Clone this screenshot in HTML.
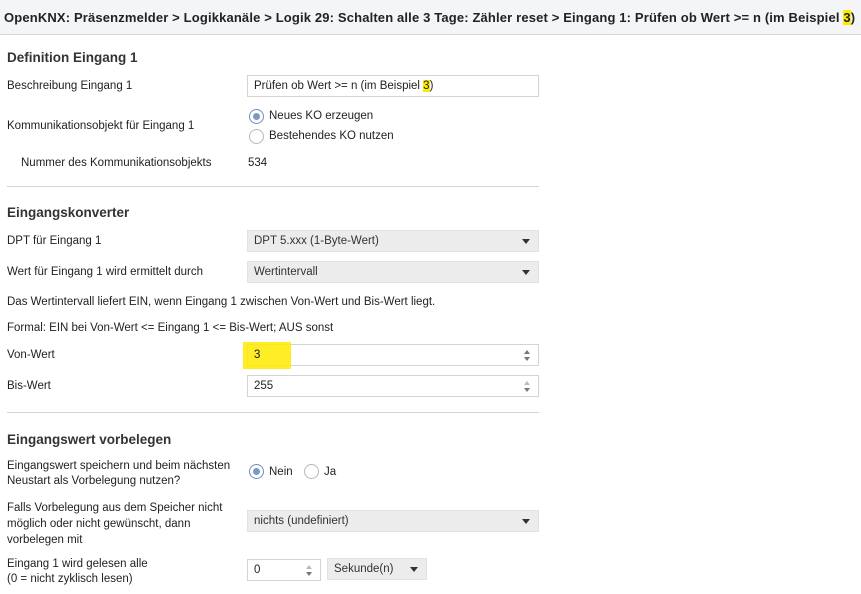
<!DOCTYPE html>
<html><head><meta charset="utf-8"><style>
*{box-sizing:border-box;margin:0;padding:0}
body{width:861px;height:594px;background:#fff;font-family:"Liberation Sans",sans-serif;color:#222;position:relative;overflow:hidden;font-size:12px}
.a{position:absolute;white-space:nowrap}
.hdr{position:absolute;left:0;top:0;width:861px;height:35px;background:#f4f5f7;border-bottom:1px solid #d8d8d8}
.title{left:4px;top:10px;font-size:13px;font-weight:bold;color:#222;letter-spacing:0.15px}
.h{font-size:13.5px;font-weight:bold;color:#333}
.lbl{font-size:11.5px;color:#222}
.inp{position:absolute;height:22px;border:1px solid #d4d4d4;background:#fff;font-size:11.5px;padding:0 6px;line-height:20px;white-space:nowrap}
.sel{position:absolute;height:22px;border:1px solid #e2e2e2;background:#ececec;font-size:11.5px;padding:0 6px;line-height:20px;color:#333;white-space:nowrap}
.sel:after{content:"";position:absolute;right:8px;top:8px;border-left:4px solid transparent;border-right:4px solid transparent;border-top:5px solid #333}
.sp:before{content:"";position:absolute;right:8px;top:5px;border-left:3px solid transparent;border-right:3px solid transparent;border-bottom:4px solid #777}
.sp:after{content:"";position:absolute;right:8px;top:12px;border-left:3px solid transparent;border-right:3px solid transparent;border-top:4px solid #777}
.sp.dis:before{border-bottom-color:#bbb}
.r{position:absolute;width:15px;height:15px;border:1px solid #b8b8b8;border-radius:50%;background:#fff}
.r.on{border-color:#6d8fb8}
.r.on:after{content:"";position:absolute;left:3px;top:3px;width:7px;height:7px;border-radius:50%;background:#7b9ac0}
.line{position:absolute;left:7px;width:532px;height:1px;background:#d4d4d4}
.hl{background:#ffeb00}
</style></head><body>
<div class="hdr"></div>
<div class="a title">OpenKNX: Präsenzmelder &gt; Logikkanäle &gt; Logik 29: Schalten alle 3 Tage: Zähler reset &gt; Eingang 1: Prüfen ob Wert &gt;= n (im Beispiel <span class="hl">3</span>)</div>

<div class="a h" style="left:7px;top:50px">Definition Eingang 1</div>
<div class="a lbl" style="left:7px;top:80px">Beschreibung Eingang 1</div>
<div class="inp" style="left:247px;top:75px;width:292px">Prüfen ob Wert &gt;= n (im Beispiel <span class="hl">3</span>)</div>
<div class="a lbl" style="left:7px;top:120px">Kommunikationsobjekt für Eingang 1</div>
<div class="r on" style="left:249px;top:109px"></div>
<div class="a lbl" style="left:269px;top:110px">Neues KO erzeugen</div>
<div class="r" style="left:249px;top:129px"></div>
<div class="a lbl" style="left:269px;top:130px">Bestehendes KO nutzen</div>
<div class="a lbl" style="left:21px;top:157px">Nummer des Kommunikationsobjekts</div>
<div class="a lbl" style="left:248px;top:157px">534</div>
<div class="line" style="top:186px"></div>

<div class="a h" style="left:7px;top:205px">Eingangskonverter</div>
<div class="a lbl" style="left:7px;top:235px">DPT für Eingang 1</div>
<div class="sel" style="left:247px;top:230px;width:292px">DPT 5.xxx (1-Byte-Wert)</div>
<div class="a lbl" style="left:7px;top:266px">Wert für Eingang 1 wird ermittelt durch</div>
<div class="sel" style="left:247px;top:261px;width:292px">Wertintervall</div>
<div class="a lbl" style="left:7px;top:296px">Das Wertintervall liefert EIN, wenn Eingang 1 zwischen Von-Wert und Bis-Wert liegt.</div>
<div class="a lbl" style="left:7px;top:322px">Formal: EIN bei Von-Wert &lt;= Eingang 1 &lt;= Bis-Wert; AUS sonst</div>
<div class="a lbl" style="left:7px;top:349px">Von-Wert</div>
<div class="inp sp" style="left:247px;top:344px;width:292px">3</div>
<div class="a" style="left:243px;top:342px;width:48px;height:27px;background:#ffeb00;opacity:.85"></div>
<div class="a lbl" style="left:254px;top:349px">3</div>
<div class="a lbl" style="left:7px;top:380px">Bis-Wert</div>
<div class="inp sp dis" style="left:247px;top:375px;width:292px">255</div>
<div class="line" style="top:412px"></div>

<div class="a h" style="left:7px;top:432px">Eingangswert vorbelegen</div>
<div class="a lbl" style="left:7px;top:459px;line-height:15px">Eingangswert speichern und beim nächsten<br>Neustart als Vorbelegung nutzen?</div>
<div class="r on" style="left:249px;top:464px"></div>
<div class="a lbl" style="left:269px;top:466px">Nein</div>
<div class="r" style="left:304px;top:464px"></div>
<div class="a lbl" style="left:324px;top:466px">Ja</div>
<div class="a lbl" style="left:7px;top:500px;line-height:16px">Falls Vorbelegung aus dem Speicher nicht<br>möglich oder nicht gewünscht, dann<br>vorbelegen mit</div>
<div class="sel" style="left:247px;top:510px;width:292px">nichts (undefiniert)</div>
<div class="a lbl" style="left:7px;top:557px;line-height:15px">Eingang 1 wird gelesen alle<br>(0 = nicht zyklisch lesen)</div>
<div class="inp sp dis" style="left:247px;top:559px;width:74px">0</div>
<div class="sel" style="left:327px;top:558px;width:100px">Sekunde(n)</div>
</body></html>
